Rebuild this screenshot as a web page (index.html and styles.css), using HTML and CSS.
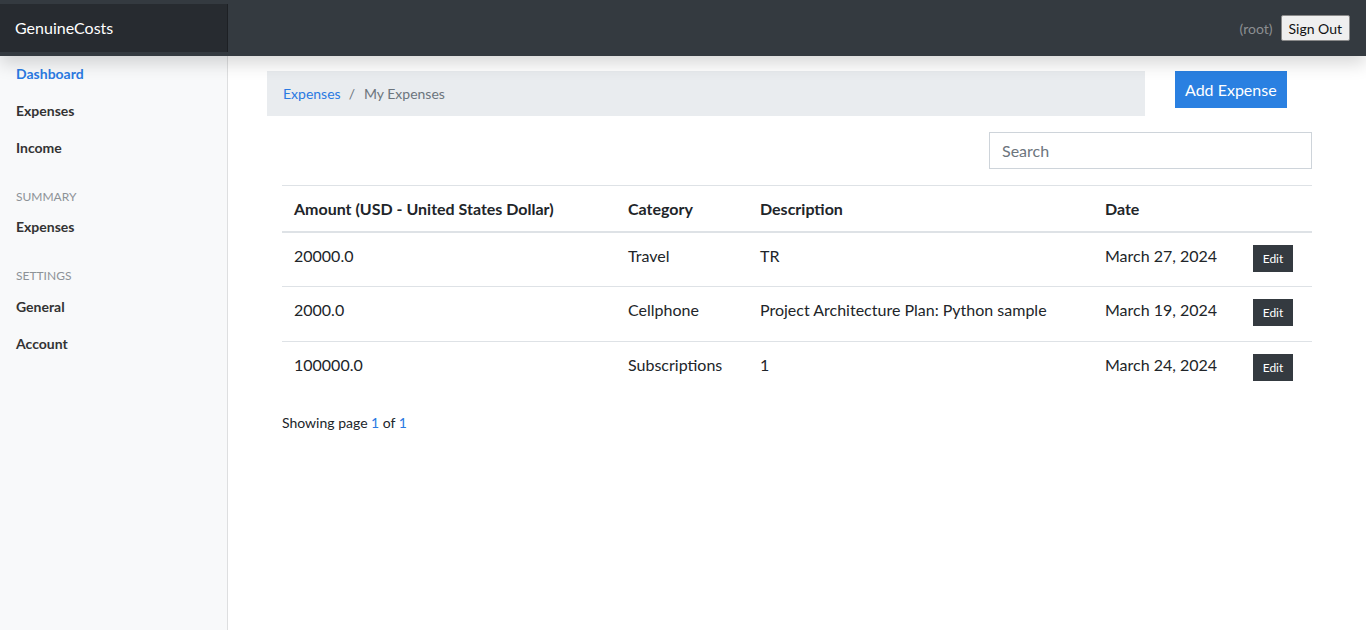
FILE: index.html
```html
<!DOCTYPE html>
<html lang="en">
<head>
<meta charset="utf-8">
<title>GenuineCosts - My Expenses</title>
<link rel="stylesheet" href="styles.css">
</head>
<body>
<header class="topbar">
  <a class="brand" href="#">GenuineCosts</a>
  <div class="user">
    <span class="user-name">(root)</span>
    <button class="signout" type="button">Sign Out</button>
  </div>
</header>
<div class="layout">
  <nav class="sidebar">
    <ul class="nav">
      <li><a class="nav-link active" href="#">Dashboard</a></li>
      <li><a class="nav-link" href="#">Expenses</a></li>
      <li><a class="nav-link" href="#">Income</a></li>
    </ul>
    <h6 class="sidebar-heading">Summary</h6>
    <ul class="nav">
      <li><a class="nav-link" href="#">Expenses</a></li>
    </ul>
    <h6 class="sidebar-heading">Settings</h6>
    <ul class="nav">
      <li><a class="nav-link" href="#">General</a></li>
      <li><a class="nav-link" href="#">Account</a></li>
    </ul>
  </nav>
  <main class="main">
    <div class="toolbar">
      <ol class="breadcrumb">
        <li class="crumb"><a href="#">Expenses</a></li>
        <li class="crumb-sep">/</li>
        <li class="crumb current">My Expenses</li>
      </ol>
      <button class="btn-add" type="button">Add Expense</button>
    </div>
    <div class="content">
      <div class="search-row">
        <input class="search" type="text" placeholder="Search">
      </div>
      <table class="table">
        <colgroup>
          <col class="c-amount"><col class="c-cat"><col class="c-desc"><col class="c-date"><col class="c-act">
        </colgroup>
        <thead>
          <tr>
            <th>Amount (USD - United States Dollar)</th>
            <th>Category</th>
            <th>Description</th>
            <th>Date</th>
            <th></th>
          </tr>
        </thead>
        <tbody>
          <tr>
            <td>20000.0</td>
            <td>Travel</td>
            <td>TR</td>
            <td>March 27, 2024</td>
            <td><button class="btn-edit" type="button">Edit</button></td>
          </tr>
          <tr>
            <td>2000.0</td>
            <td>Cellphone</td>
            <td>Project Architecture Plan: Python sample</td>
            <td>March 19, 2024</td>
            <td><button class="btn-edit" type="button">Edit</button></td>
          </tr>
          <tr>
            <td>100000.0</td>
            <td>Subscriptions</td>
            <td>1</td>
            <td>March 24, 2024</td>
            <td><button class="btn-edit" type="button">Edit</button></td>
          </tr>
        </tbody>
      </table>
      <p class="pager">Showing page <a href="#">1</a> of <a href="#">1</a></p>
    </div>
  </main>
</div>
</body>
</html>
```
FILE: styles.css
```css
* { box-sizing: border-box; }

html, body {
  margin: 0;
  padding: 0;
  height: 100%;
}

body {
  font-family: "Lato", "Segoe UI", "Noto Sans", sans-serif;
  font-size: 16px;
  line-height: 1.5;
  color: #212529;
  background: #fff;
}

a { text-decoration: none; }

/* top bar */
.topbar {
  position: relative;
  z-index: 10;
  display: flex;
  align-items: center;
  height: 56px;
  padding: 4px 0;
  background: #343a40;
  box-shadow: 0 8px 16px rgba(0, 0, 0, 0.15);
}

.brand {
  width: 228px;
  height: 48px;
  padding: 12px 15px;
  font-size: 16px;
  line-height: 24px;
  color: #fff;
  background: rgba(0, 0, 0, 0.25);
  box-shadow: inset -1px 0 0 rgba(0, 0, 0, 0.25);
}

.user {
  margin-left: auto;
  display: flex;
  align-items: center;
  gap: 8px;
  padding-right: 16px;
}

.user-name {
  font-size: 14px;
  color: #8c8f92;
}

.signout {
  height: 26px;
  padding: 0 7px;
  font-family: inherit;
  font-size: 14px;
  color: #111;
  background: #efefef;
  border: 1px solid #8a8a8a;
  border-radius: 2px;
}

/* layout */
.layout {
  display: flex;
  min-height: calc(100% - 56px);
}

.sidebar {
  flex: 0 0 228px;
  padding-top: 0;
  margin-top: -1px;
  background: #f8f9fa;
  box-shadow: inset -1px 0 0 rgba(0, 0, 0, 0.1);
}

.nav {
  list-style: none;
  margin: 0;
  padding: 0;
}

.nav-link {
  display: block;
  padding: 8px 16px;
  font-size: 14px;
  line-height: 21px;
  font-weight: 700;
  color: #333;
}

.nav-link.active { color: #2a7ae2; }

.sidebar-heading {
  margin: 24px 0 4px;
  padding: 0 16px;
  font-size: 12px;
  line-height: 14.4px;
  font-weight: 400;
  text-transform: uppercase;
  color: #8d9297;
}

/* main */
.main {
  flex: 1;
  padding: 15px 39px 0 39px;
}

.toolbar {
  display: flex;
  align-items: flex-start;
  gap: 30px;
}

.breadcrumb {
  display: flex;
  width: 878px;
  margin: 0;
  padding: 12px 16px;
  list-style: none;
  font-size: 14px;
  line-height: 21px;
  background: #e9ecef;
}

.crumb a { color: #2a7ae2; }

.crumb-sep {
  padding: 0 9px 0 8px;
  color: #6c757d;
}

.crumb.current { color: #6c757d; }

.btn-add {
  height: 37px;
  padding: 0 9px;
  font-family: inherit;
  font-size: 16px;
  color: #fff;
  background: #2a80e1;
  border: 1px solid #2a80e1;
  border-radius: 0;
}

.content {
  padding: 16px 15px 0 15px;
}

.search-row {
  display: flex;
  justify-content: flex-end;
  margin-bottom: 16px;
}

.search {
  width: 323px;
  height: 37px;
  padding: 6px 12px;
  font-family: inherit;
  font-size: 16px;
  color: #495057;
  border: 1px solid #ced4da;
  border-radius: 0;
}

.search::placeholder { color: #6c757d; }

/* table */
.table {
  width: 100%;
  border-collapse: collapse;
  margin-bottom: 16px;
}

.c-amount { width: 334px; }
.c-cat { width: 132px; }
.c-desc { width: 345px; }
.c-date { width: 148px; }
.c-act { width: 71px; }

.table th {
  padding: 12px;
  font-size: 16px;
  line-height: 21px;
  font-weight: 700;
  text-align: left;
  border-top: 1px solid #dee2e6;
  border-bottom: 2px solid #dee2e6;
}

.table td {
  height: 55px;
  padding: 11px 12px 12px;
  font-size: 16px;
  line-height: 24px;
  vertical-align: top;
  border-top: 1px solid #dee2e6;
}

.table thead + tbody tr:first-child td {
  height: 54px;
  border-top: none;
}

.btn-edit {
  display: block;
  width: 40px;
  height: 27px;
  margin-top: 1px;
  padding: 0;
  font-family: inherit;
  font-size: 12px;
  color: #fff;
  background: #343a40;
  border: 1px solid #343a40;
  border-radius: 0;
}

.pager {
  margin: 0;
  font-size: 14px;
  line-height: 21px;
  color: #212529;
}

.pager a { color: #2a7ae2; }
```
